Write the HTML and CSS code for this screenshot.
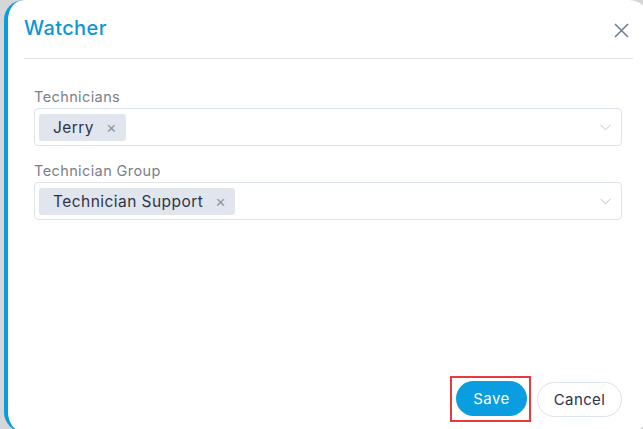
FILE: index.html
```html
<!DOCTYPE html>
<html>
<head>
<meta charset="utf-8">
<link rel="stylesheet" href="styles.css">
</head>
<body>
<div class="modal">
  <div class="header">
    <h1 class="title">Watcher</h1>
    <button class="close" aria-label="Close">
      <svg width="15" height="15" viewBox="0 0 15 15"><path d="M1 1L14 14M14 1L1 14" stroke="#6e7f96" stroke-width="1.6" fill="none"/></svg>
    </button>
  </div>
  <div class="content">
    <div class="field">
      <label class="label">Technicians</label>
      <div class="select">
        <span class="tag">Jerry<span class="tag-x">×</span></span>
        <svg class="chev" width="11" height="7" viewBox="0 0 11 7"><path d="M0.5 0.8L5.5 5.8L10.5 0.8" stroke="#b9c3d0" stroke-width="1" fill="none"/></svg>
      </div>
    </div>
    <div class="field">
      <label class="label">Technician Group</label>
      <div class="select">
        <span class="tag">Technician Support<span class="tag-x">×</span></span>
        <svg class="chev" width="11" height="7" viewBox="0 0 11 7"><path d="M0.5 0.8L5.5 5.8L10.5 0.8" stroke="#b9c3d0" stroke-width="1" fill="none"/></svg>
      </div>
    </div>
  </div>
  <div class="footer">
    <span class="highlight"><button class="btn btn-primary">Save</button></span>
    <button class="btn btn-default">Cancel</button>
  </div>
</div>
</body>
</html>
```
FILE: styles.css
```css
html, body {
  margin: 0;
  padding: 0;
}
body {
  width: 643px;
  height: 429px;
  overflow: hidden;
  background: #d4d6d8;
  font-family: "Inter", "Open Sans", sans-serif;
}
.modal {
  margin-left: 4px;
  width: 645px;
  height: 432px;
  box-sizing: border-box;
  background: #fff;
  border-left: 4px solid #0b9bdb;
  border-radius: 20px;
  display: flex;
  flex-direction: column;
}
.header {
  margin: 0 0 0 16px;
  width: 609px;
  height: 59px;
  box-sizing: border-box;
  border-bottom: 1px solid #dfe4ea;
  display: flex;
  justify-content: space-between;
  align-items: flex-start;
  padding: 16px 4px 0 0;
}
.title {
  margin: 0;
  font-size: 20px;
  letter-spacing: 0.4px;
  line-height: 24px;
  font-weight: 500;
  color: #0d97d7;
}
.close {
  border: 0;
  background: none;
  padding: 0;
  margin-top: 7px;
  line-height: 0;
}
.content {
  padding: 29px 27px 0 26px;
  display: flex;
  flex-direction: column;
  gap: 16px;
}
.field {
  display: flex;
  flex-direction: column;
  gap: 2px;
}
.label {
  font-size: 14.5px;
  letter-spacing: 0.4px;
  line-height: 18px;
  color: #7b8089;
}
.select {
  height: 38px;
  box-sizing: border-box;
  border: 1px solid #dde3ea;
  border-radius: 4px;
  display: flex;
  align-items: center;
  padding: 0 10px 0 4px;
}
.tag {
  display: inline-flex;
  align-items: center;
  height: 27px;
  background: #e1e6ee;
  border-radius: 3px;
  padding: 0 9px 0 14px;
  font-size: 15.5px;
  letter-spacing: 0.45px;
  color: #2f3347;
}
.tag-x {
  margin-left: 12px;
  font-size: 16px;
  color: #8b94a1;
}
.chev {
  margin-left: auto;
}
.footer {
  margin-top: auto;
  padding: 0 27px 10px 0;
  display: flex;
  justify-content: flex-end;
  align-items: center;
  gap: 6px;
}
.highlight {
  display: inline-flex;
  border: 2px solid #e8393b;
  padding: 3px 2px 4px 4px;
}
.btn {
  height: 35px;
  border-radius: 18px;
  font-family: inherit;
  font-size: 15px;
  letter-spacing: 0.4px;
  padding: 0;
}
.btn-primary {
  width: 71px;
  background: #0a9ddf;
  color: #fff;
  border: 0;
}
.btn-default {
  width: 85px;
  background: #fff;
  color: #2f3347;
  border: 1px solid #dde3ea;
}
```
